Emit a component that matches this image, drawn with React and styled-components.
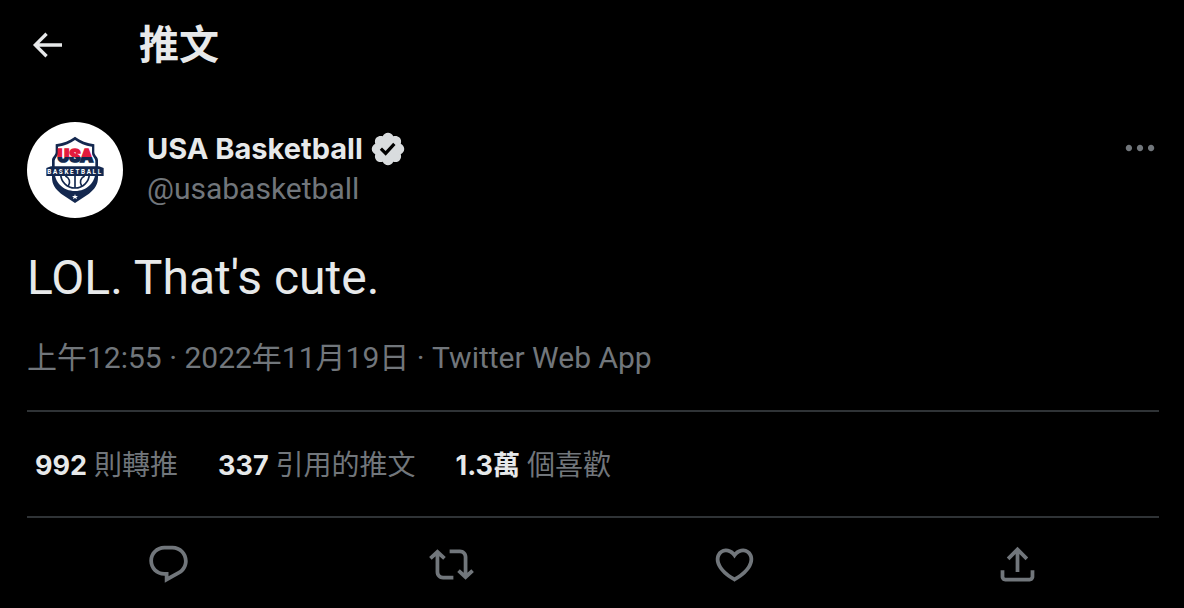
import React from 'react';
import styled, { createGlobalStyle, ThemeProvider } from 'styled-components';

const theme = {
  colors: {
    background: '#000000',
    primary: '#e7e9ea',
    secondary: '#71767b',
    border: '#2f3336',
    badge: '#d9dcde',
    navy: '#14284f',
    red: '#e31b3d',
  },
  fonts: {
    body: "Roboto, 'Noto Sans CJK TC', sans-serif",
    bold: "Inter, 'Noto Sans CJK TC', sans-serif",
    small: '28px',
    medium: '30px',
    title: '40px',
    large: '48px',
  },
};

const paths = {
  back: 'M7.414 13l5.043 5.04-1.414 1.42L3.586 12l7.457-7.46 1.414 1.42L7.414 11H21v2H7.414z',
  more: 'M3 12c0-1.1.9-2 2-2s2 .9 2 2-.9 2-2 2-2-.9-2-2zm9 2c1.1 0 2-.9 2-2s-.9-2-2-2-2 .9-2 2 .9 2 2 2zm7 0c1.1 0 2-.9 2-2s-.9-2-2-2-2 .9-2 2 .9 2 2 2z',
  verified:
    'M22.25 12c0-1.43-.88-2.67-2.19-3.34.46-1.39.2-2.9-.81-3.91s-2.52-1.27-3.91-.81c-.66-1.31-1.91-2.19-3.34-2.19s-2.67.88-3.33 2.19c-1.4-.46-2.91-.2-3.92.81s-1.26 2.52-.8 3.91c-1.31.67-2.2 1.91-2.2 3.34s.89 2.67 2.2 3.34c-.46 1.39-.21 2.9.8 3.91s2.52 1.26 3.91.81c.67 1.31 1.91 2.19 3.34 2.19s2.68-.88 3.34-2.19c1.39.45 2.9.2 3.91-.81s1.27-2.52.81-3.91c1.31-.67 2.19-1.91 2.19-3.34zm-11.71 4.2L6.8 12.46l1.41-1.42 2.26 2.26 4.8-5.23 1.47 1.36-6.2 6.77z',
  reply:
    'M1.751 10c0-4.42 3.584-8 8.005-8h4.366c4.49 0 8.129 3.64 8.129 8.13 0 2.96-1.607 5.68-4.196 7.11l-8.054 4.46v-3.69h-.067c-4.49.1-8.183-3.51-8.183-8.01zm8.005-6c-3.317 0-6.005 2.69-6.005 6 0 3.37 2.77 6.08 6.138 6.01l.351-.01h1.761v2.3l5.087-2.81c1.951-1.08 3.163-3.13 3.163-5.36 0-3.39-2.744-6.13-6.129-6.13H9.756z',
  retweet:
    'M4.5 3.88l4.432 4.14-1.364 1.46L5.5 7.55V16c0 1.1.896 2 2 2H13v2H7.5c-2.209 0-4-1.79-4-4V7.55L1.432 9.48.068 8.02 4.5 3.88zM16.5 6H11V4h5.5c2.209 0 4 1.79 4 4v8.45l2.068-1.93 1.364 1.46-4.432 4.14-4.432-4.14 1.364-1.46 2.068 1.93V8c0-1.1-.896-2-2-2z',
  like: 'M16.697 5.5c-1.222-.06-2.679.51-3.89 2.16l-.805 1.09-.806-1.09C9.984 6.01 8.526 5.44 7.304 5.5c-1.243.07-2.349.78-2.91 1.91-.552 1.12-.633 2.78.479 4.82 1.074 1.97 3.257 4.27 7.129 6.61 3.87-2.34 6.052-4.64 7.126-6.61 1.111-2.04 1.03-3.7.477-4.82-.561-1.13-1.666-1.84-2.908-1.91zm4.187 7.69c-1.351 2.48-4.001 5.12-8.379 7.67l-.503.3-.504-.3c-4.379-2.55-7.029-5.19-8.382-7.67-1.36-2.5-1.41-4.86-.514-6.67.887-1.79 2.647-2.91 4.601-3.01 1.651-.09 3.368.56 4.798 2.01 1.429-1.45 3.146-2.1 4.796-2.01 1.954.1 3.714 1.22 4.601 3.01.896 1.81.846 4.17-.514 6.67z',
  share:
    'M12 2.59l5.7 5.7-1.41 1.42L13 6.41V16h-2V6.41l-3.3 3.3-1.41-1.42L12 2.59zM21 15l-.02 3.51c0 1.38-1.12 2.49-2.5 2.49H5.5C4.11 21 3 19.88 3 18.5V15h2v3.5c0 .28.22.5.5.5h12.98c.28 0 .5-.22.5-.5L19 15h2z',
};

const stats = [
  { count: '992', label: '則轉推' },
  { count: '337', label: '引用的推文' },
  { count: '1.3萬', label: '個喜歡' },
];

const actions = [
  { icon: 'reply', label: '回覆' },
  { icon: 'retweet', label: '轉推' },
  { icon: 'like', label: '喜歡' },
  { icon: 'share', label: '分享' },
];

const Icon = ({ name, size }) => (
  <Svg viewBox="0 0 24 24" $size={size} aria-hidden="true">
    <path d={paths[name]} />
  </Svg>
);

const TeamLogo = () => {
  const { navy, red } = theme.colors;

  return (
    <Svg viewBox="0 0 288 288" $size={96} aria-hidden="true">
      <defs>
        <linearGradient id="usa" gradientUnits="userSpaceOnUse" x1="0" y1="78" x2="0" y2="124">
          <stop offset="57%" stopColor={red} />
          <stop offset="57%" stopColor="#fff" />
          <stop offset="61%" stopColor="#fff" />
          <stop offset="61%" stopColor={navy} />
        </linearGradient>
      </defs>
      <path
        d="M144 44C128 56 108 64 86 67V90C86 101 75 104 75 115V166C75 188 84 200 102 215L144 243L186 215C204 200 213 188 213 166V115C213 104 202 101 202 90V67C180 64 160 56 144 44Z"
        fill={navy}
      />
      <path
        d="M144 54C130 64 114 71 93 74V92C93 104 83 108 83 118V136H205V118C205 108 195 104 195 92V74C174 71 158 64 144 54Z"
        fill="#fff"
      />
      {/* ball, hidden above the ribbon */}
      <path d="M83 150C83 181 108 207 144 207C180 207 205 181 205 150Z" fill="#fff" />
      <g fill="none" stroke={navy} strokeWidth="5">
        <path d="M101 155C101 179 120 198 144 198C168 198 187 179 187 155" />
        <path d="M144 156V198M115 162C128 168 131 180 124 192M173 162C160 168 157 180 164 192" />
      </g>
      <path d="M58 138L72 133H216L230 138V162H58Z" fill={navy} />
      <text
        x="144"
        y="121"
        textAnchor="middle"
        fontFamily="Roboto, sans-serif"
        fontSize="54"
        fontWeight="900"
        fill="url(#usa)"
        stroke="url(#usa)"
        strokeWidth="5"
      >
        USA
      </text>
      <text
        x="144"
        y="155"
        textAnchor="middle"
        fontFamily="Roboto, sans-serif"
        fontSize="19"
        fontWeight="700"
        letterSpacing="5"
        fill="#fff"
      >
        BASKETBALL
      </text>
      <path d="M144 216L146 222H153L148 226L150 232L144 228L138 232L140 226L135 222H142Z" fill="#fff" />
    </Svg>
  );
};

const App = () => (
  <ThemeProvider theme={theme}>
    <GlobalStyle />
    <Page>
      <Header>
        <IconButton type="button" aria-label="返回">
          <Icon name="back" size={40} />
        </IconButton>
        <Title>推文</Title>
      </Header>
      <Tweet>
        <Author>
          <Avatar href="#profile" aria-label="USA Basketball">
            <TeamLogo />
          </Avatar>
          <Names>
            <Name href="#profile">
              USA Basketball
              <Badge>
                <Icon name="verified" size={38} />
              </Badge>
            </Name>
            <Handle href="#profile">@usabasketball</Handle>
          </Names>
          <MoreButton type="button" aria-label="更多">
            <Icon name="more" size={38} />
          </MoreButton>
        </Author>
        <Message>LOL. That's cute.</Message>
        <Meta>
          <MetaLink href="#status">上午12:55 · 2022年11月19日</MetaLink>
          {' · '}
          <MetaLink href="#source">Twitter Web App</MetaLink>
        </Meta>
        <Stats>
          {stats.map(({ count, label }) => (
            <Stat href="#stats" key={label}>
              <Count>{count}</Count> {label}
            </Stat>
          ))}
        </Stats>
        <Actions>
          {actions.map(({ icon, label }) => (
            <IconButton type="button" key={icon} aria-label={label} $muted>
              <Icon name={icon} size={45} />
            </IconButton>
          ))}
        </Actions>
      </Tweet>
    </Page>
  </ThemeProvider>
);

const GlobalStyle = createGlobalStyle`
  * {
    box-sizing: border-box;
  }
  body {
    margin: 0;
    background: ${theme.colors.background};
    font-family: ${theme.fonts.body};
  }
  a {
    color: inherit;
    text-decoration: none;
  }
`;
const Page = styled.main`
  padding: 0 25px 0 27px;
  color: ${(props) => props.theme.colors.primary};
`;
const Svg = styled.svg`
  display: block;
  flex: none;
  width: ${(props) => props.$size}px;
  height: ${(props) => props.$size}px;
  fill: currentColor;
`;
const Header = styled.header`
  display: flex;
  align-items: center;
  gap: 72px;
  height: 90px;
`;
const IconButton = styled.button`
  padding: 0;
  border: 0;
  background: none;
  color: ${(props) => (props.$muted ? props.theme.colors.secondary : props.theme.colors.primary)};
  cursor: pointer;
`;
const Title = styled.h1`
  margin: 0;
  font-family: ${(props) => props.theme.fonts.bold};
  font-size: ${(props) => props.theme.fonts.title};
  font-weight: 700;
  line-height: 48px;
`;
const Tweet = styled.article`
  padding-top: 32px;
`;
const Author = styled.div`
  display: flex;
  align-items: flex-start;
  gap: 24px;
`;
const Avatar = styled.a`
  overflow: hidden;
  border-radius: 50%;
  background: #fff;
`;
const Names = styled.div`
  flex: 1;
  padding-top: 7px;
  font-size: ${(props) => props.theme.fonts.medium};
  line-height: 40px;
`;
const Name = styled.a`
  display: flex;
  align-items: center;
  gap: 6px;
  font-family: ${(props) => props.theme.fonts.bold};
  font-size: 29px;
  font-weight: 700;
`;
const Badge = styled.span`
  color: ${(props) => props.theme.colors.badge};
`;
const Handle = styled.a`
  color: ${(props) => props.theme.colors.secondary};
`;
const MoreButton = styled(IconButton)`
  padding-top: 7px;
  color: ${(props) => props.theme.colors.secondary};
`;
const Message = styled.p`
  margin: 32px 0;
  font-size: ${(props) => props.theme.fonts.large};
  line-height: 56px;
`;
const Meta = styled.div`
  padding-bottom: 32px;
  border-bottom: 2px solid ${(props) => props.theme.colors.border};
  color: ${(props) => props.theme.colors.secondary};
  font-size: ${(props) => props.theme.fonts.medium};
  line-height: 40px;
`;
const MetaLink = styled.a``;
const Stats = styled.div`
  display: flex;
  gap: 40px;
  padding: 34px 8px 30px;
  border-bottom: 2px solid ${(props) => props.theme.colors.border};
  font-size: ${(props) => props.theme.fonts.small};
  line-height: 40px;
`;
const Stat = styled.a`
  color: ${(props) => props.theme.colors.secondary};
`;
const Count = styled.span`
  color: ${(props) => props.theme.colors.primary};
  font-family: ${(props) => props.theme.fonts.bold};
  font-size: 27px;
  font-weight: 700;
`;
const Actions = styled.div`
  display: flex;
  justify-content: space-around;
  padding: 24px 0 16px;
`;

export default App;
